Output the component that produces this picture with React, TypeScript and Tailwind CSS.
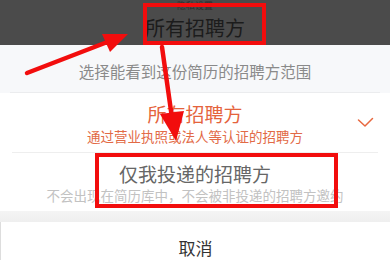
import React from "react";

export default function App() {
  const font = { fontFamily: '"Noto Sans CJK SC", "Noto Sans", sans-serif' };
  return (
    <div className="relative w-[390px] h-[260px] overflow-hidden bg-white" style={font}>
      {/* dark band */}
      <div className="h-[45px] bg-[#4b4b4b] flex flex-col items-center">
        <p className="text-[9px] leading-[11px] mt-0 text-[#2e2e2e]">隐私设置</p>
        <p className="text-[20px] leading-[26px] mt-[4px] text-[#1c1c1c]">所有招聘方</p>
      </div>
      {/* header */}
      <div className="h-[47px] bg-[#f7f8fa] flex items-center justify-center pt-[5px]">
        <p className="text-[15.5px] leading-[20px] text-[#8a8a8a]">选择能看到这份简历的招聘方范围</p>
      </div>
      <div className="bg-[#f7f8fa]">
        <div className="h-px mx-[10px] bg-[#ebecee]" />
      </div>
      {/* option 1 */}
      <div className="relative h-[59px] flex flex-col items-center pt-[9px]">
        <p className="text-[19px] leading-[24px] text-[#e5633c]">所有招聘方</p>
        <p className="text-[13.5px] leading-[18px] mt-[1px] text-[#e26a46]">通过营业执照或法人等认证的招聘方</p>
        <svg className="absolute left-[357px] top-[24px]" width="17" height="11" viewBox="0 0 17 11">
          <path d="M1.5 3 L8 9 L15.5 1.5" fill="none" stroke="#e8683f" strokeWidth="1.5" strokeLinecap="round" strokeLinejoin="round" />
        </svg>
      </div>
      <div className="h-px ml-[12px] mr-[12px] bg-[#eeeeee]" />
      {/* option 2 */}
      <div className="h-[58px] flex flex-col items-center pt-[9px]">
        <p className="text-[19px] leading-[24px] text-[#666666]">仅我投递的招聘方</p>
        <p className="text-[13.5px] leading-[18px] text-[#c2c2c2]">不会出现在简历库中，不会被非投递的招聘方邀约</p>
      </div>
      {/* separator band */}
      <div className="h-[11px] bg-gradient-to-b from-[#f4f4f4] to-[#efefef]" />
      {/* cancel */}
      <div className="h-[52px] flex items-center justify-center border-l border-[#dddddd]">
        <p className="text-[17px] leading-[22px] text-[#333333]">取消</p>
      </div>

      {/* annotation boxes */}
      <div className="absolute left-[143px] top-[3px] w-[123px] h-[42px] border-4 border-[#f20d0d]" />
      <div className="absolute left-[95px] top-[153px] w-[243px] h-[55px] border-4 border-[#f20d0d]" />

      {/* annotation arrows */}
      <svg className="absolute left-0 top-0" width="390" height="260" viewBox="0 0 390 260">
        <line x1="27" y1="73" x2="110" y2="41" stroke="#f20d0d" strokeWidth="4.5" strokeLinecap="round" />
        <polygon points="128,34 102,34 110,52" fill="#f20d0d" />
        <line x1="162" y1="47" x2="172" y2="118" stroke="#f20d0d" strokeWidth="4.5" strokeLinecap="round" />
        <polygon points="176,141 160,114 184,111" fill="#f20d0d" />
      </svg>
    </div>
  );
}
